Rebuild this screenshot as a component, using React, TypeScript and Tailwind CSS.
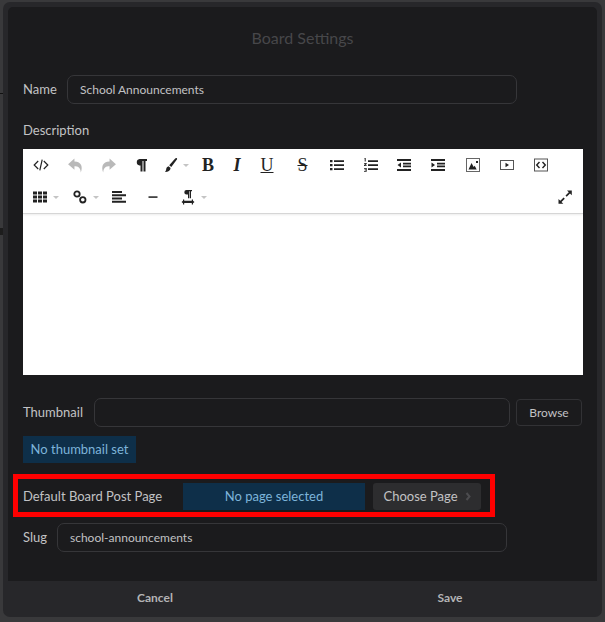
import React from "react";

const I = ({ children, w = 16, h = 16, vb = "0 0 16 16", c = "#222" }: any) => (
  <svg width={w} height={h} viewBox={vb} fill={c} className="block shrink-0">{children}</svg>
);
const Caret = () => <span className="ml-[5px] block w-0 h-0 border-x-[3px] border-x-transparent border-t-[3px] border-t-[#c4c4c4]" />;

const Code = () => (
  <I><path d="M5.200 4 1.200 8l4 4M10.800 4l4 4-4 4M9.200 2.600 6.800 13.400" fill="none" stroke="#222" strokeWidth="1.200" /></I>
);
const Undo = () => (
  <I c="#b9b9b9" w={17} h={17}><path d="M7 1.500 1 6.800 7 12V8.800c3.500 0 5.500 1 6 5.700 1.900-5 .9-10-6-10.300z" /></I>
);
const Redo = () => (
  <I c="#b9b9b9" w={17} h={17}><path d="M9 1.500l6 5.300L9 12V8.800c-3.500 0-5.500 1-6 5.700-1.900-5-.9-10 6-10.300z" /></I>
);
const Para = () => (
  <I><path d="M6.500 2H14v2h-1.500v10.500h-2V4H9.500v10.500h-2V8.500H6.500a3.300 3.300 0 0 1 0-6.500z" /></I>
);
const Brush = () => (
  <I><path d="M14.500 1c.7.300.8 1 .4 1.600L9.300 10 7.200 8.300l6-6.800c.4-.4.800-.6 1.300-.5zM6.600 9.200l2 1.700c-.2 2.600-2.400 4-5.600 4.100 1.100-1.200 1.100-2 1.200-2.900.1-1.300 1-2.500 2.400-2.900z" /></I>
);
const Bars = ({ d }: { d: string }) => <I><path d={d} /></I>;
const ListUl = () => <Bars d="M1 3h2.500v2.200H1zM1 7h2.500v2.200H1zM1 11h2.500v2.200H1zM5 3.200h10v1.800H5zM5 7.200h10V9H5zM5 11.200h10V13H5z" />;
const ListOl = () => (
  <I><path d="M5 3.200h10v1.800H5zM5 7.200h10V9H5zM5 11.200h10V13H5z" /><path d="M1.500 1h1.200v3.500H1.700V2H1.500zM1 6h2.700v1L2.200 8.200h1.500V9H1V8l1.500-1.200H1zM1 11h2.700v3.800H1V14h1.700v-.7H1.500v-.7h1.200v-.8H1z" /></I>
);
const Outdent = () => <Bars d="M1 2h14v2H1zM7 5.800h8v1.600H7zM7 8.600h8v1.600H7zM1 12h14v2H1zM5 5.500v5L1.500 8z" />;
const Indent = () => <Bars d="M1 2h14v2H1zM7 5.800h8v1.600H7zM7 8.600h8v1.600H7zM1 12h14v2H1zM1.500 5.500v5L5 8z" />;
const Picture = () => (
  <I><path fillRule="evenodd" d="M1 1h14v14H1zm1 1v12h12V2z" fill="#666" /><path d="M3.500 12.500 6.500 6l2.200 4 1-1.300 2 3.800zM11 4h2v2h-2z" /></I>
);
const Video = () => (
  <I><path fillRule="evenodd" d="M1 3h14v10H1zm1 1v8h12V4z" fill="#555" /><path d="M6.500 5.800 10 8l-3.500 2.200z" /></I>
);
const Embed = () => (
  <I><path fillRule="evenodd" d="M1 1.500h14v13H1zm1 1v11h12v-11z" fill="#555" /><path d="M6.500 5 3.700 8l2.800 3M9.500 5l2.800 3-2.800 3" fill="none" stroke="#222" strokeWidth="1.400" /></I>
);
const Grid = () => <Bars d="M1 2.500h4v3H1zM6 2.500h4v3H6zM11 2.500h4v3h-4zM1 6.500h4v3H1zM6 6.500h4v3H6zM11 6.500h4v3h-4zM1 10.500h4v3H1zM6 10.500h4v3H6zM11 10.500h4v3h-4z" />;
const Link = () => (
  <I><g fill="none" stroke="#222" strokeWidth="1.800"><circle cx="5" cy="5" r="2.700" /><circle cx="10.800" cy="10.800" r="2.700" /></g></I>
);
const Align = () => <Bars d="M1 2h10v2H1zM1 5.200h14v2H1zM1 8.400h10v2H1zM1 11.800h14v2H1z" />;
const Minus = () => <I c="#444"><path d="M3.500 7.200h9V9h-9z" /></I>;
const ParaH = () => (
  <I><path d="M6.500 1H12v1.200h-1v7H9.800v-7H9.200v7H8V5.400H6.500a2.200 2.200 0 0 1 0-4.400zM3 10.500h1.200v1.300h7.600v-1.300H13v1.300l1.500 1.200L13 14.200v1.300h-1.200v-1.500H4.200v1.500H3v-1.300L1.500 13 3 11.800z" /></I>
);
const Expand = () => (
  <I><path d="M10 1.500h4.800v4.800L13 4.500 9.700 7.800 8.500 6.600 11.800 3.300zM1.500 14.800V10l1.800 1.800 3.300-3.300 1.200 1.200-3.300 3.300 1.800 1.800z" /></I>
);

const Txt = ({ className = "", children }: any) => (
  <span className={"block text-[#222] text-[18px] leading-none font-['Liberation_Serif',serif] " + className}>{children}</span>
);

const Btn = ({ className, children }: any) => (
  <div className={"h-8 flex items-center justify-center shrink-0 " + className}>{children}</div>
);

const inputBase = "h-[29px] border border-[#363639] rounded-[7px] text-[12px] text-[#c2c2c4] flex items-center pl-3 bg-[#1b1b1d]";

export default function App() {
  return (
    <div className="relative w-[605px] h-[622px] bg-[#39393b] overflow-hidden font-['Lato',sans-serif]">
      <div className="absolute left-0 top-[93px] w-[3px] h-px bg-[#111]" />
      <div className="absolute left-0 top-[228px] w-[3px] h-[7px] bg-[#1d1d1d]" />
      <div className="ml-[3px] pt-[2px] w-[599px]">
        <div className="h-[615px] rounded-[7px] bg-[#27272a] px-[5px] pt-[5px] flex flex-col">
          <div className="h-[574px] bg-[#1b1b1d] rounded-t-[5px] px-[15px] flex flex-col shrink-0">
            <h1 className="h-[68px] pt-[21px] text-center text-[16px] leading-5 text-[#47474a]">Board Settings</h1>
            <div className="flex items-center h-[29px]">
              <label className="w-[44px] text-[13px] text-[#c2c2c4]">Name</label>
              <div className={inputBase + " w-[450px]"}>School Announcements</div>
            </div>
            <div className="mt-[16px] h-[20px] text-[13px] leading-5 text-[#c2c2c4]">Description</div>
            <div className="mt-[9px] w-[560px] h-[226px] bg-white flex flex-col">
              <div className="h-[65px] border-b border-[#d6d6d6] shadow-[0_1px_2px_rgba(0,0,0,0.08)]">
                <div className="flex h-8">
                  <Btn className="w-[35px]"><Code /></Btn>
                  <Btn className="w-[34px]"><Undo /></Btn>
                  <Btn className="w-[32px]"><Redo /></Btn>
                  <Btn className="w-[34px]"><Para /></Btn>
                  <Btn className="w-[34px]"><Brush /><Caret /></Btn>
                  <Btn className="w-[32px]"><Txt className="font-bold">B</Txt></Btn>
                  <Btn className="w-[26px]"><Txt className="italic font-bold">I</Txt></Btn>
                  <Btn className="w-[34px]"><Txt className="underline">U</Txt></Btn>
                  <Btn className="w-[37px]"><Txt className="line-through">S</Txt></Btn>
                  <Btn className="w-[32px]"><ListUl /></Btn>
                  <Btn className="w-[36px]"><ListOl /></Btn>
                  <Btn className="w-[30px]"><Outdent /></Btn>
                  <Btn className="w-[38px]"><Indent /></Btn>
                  <Btn className="w-[31px]"><Picture /></Btn>
                  <Btn className="w-[37px]"><Video /></Btn>
                  <Btn className="w-[31px]"><Embed /></Btn>
                </div>
                <div className="flex h-8">
                  <Btn className="w-[44px]"><Grid /><Caret /></Btn>
                  <Btn className="w-[37px]"><Link /><Caret /></Btn>
                  <Btn className="w-[30px]"><Align /></Btn>
                  <Btn className="w-[38px]"><Minus /></Btn>
                  <Btn className="w-[43px]"><ParaH /><Caret /></Btn>
                  <div className="flex-1" />
                  <Btn className="w-[36px]"><Expand /></Btn>
                </div>
              </div>
            </div>
            <div className="mt-[23px] flex items-center h-[29px]">
              <label className="w-[71px] text-[13px] text-[#c2c2c4]">Thumbnail</label>
              <div className={inputBase + " w-[416px]"} />
              <button className="ml-[6px] w-[66px] h-[27px] border border-[#323235] rounded-[4px] text-[12px] text-[#c2c2c4]">Browse</button>
            </div>
            <div className="mt-[9px] w-[113px] h-[27px] bg-[#0e2f49] text-[13px] text-[#7db4da] flex items-center justify-center">No thumbnail set</div>
            <div className="mt-[11px] -ml-[10px] w-[482px] h-[43px] border-[5px] border-[#ff0000] flex items-center pl-[5px] pt-[2px]">
              <label className="w-[160px] text-[13px] text-[#c2c2c4] whitespace-nowrap">Default Board Post Page</label>
              <div className="w-[182px] h-[27px] bg-[#0e2f49] text-[13px] text-[#7db4da] flex items-center justify-center">No page selected</div>
              <button className="ml-[8px] w-[108px] h-[27px] bg-[#2d2d2f] rounded-[3px] text-[13px] text-[#c2c2c4] flex items-center justify-center">
                Choose Page
                <svg width="6" height="9" viewBox="0 0 6 9" className="ml-[7px]"><path d="M1.500 1 4.500 4.500 1.500 8" fill="none" stroke="#4c4c4f" strokeWidth="2" /></svg>
              </button>
            </div>
            <div className="mt-[6px] flex items-center h-[29px]">
              <label className="w-[34px] text-[13px] text-[#c2c2c4]">Slug</label>
              <div className={inputBase + " w-[450px]"}>school-announcements</div>
            </div>
          </div>
          <div className="h-[36px] flex">
            <button className="flex-1 pb-[2px] text-[12px] font-bold text-[#b4b4b6]">Cancel</button>
            <button className="flex-1 pb-[2px] pl-[1px] text-[12px] font-bold text-[#b4b4b6]">Save</button>
          </div>
        </div>
      </div>
    </div>
  );
}
